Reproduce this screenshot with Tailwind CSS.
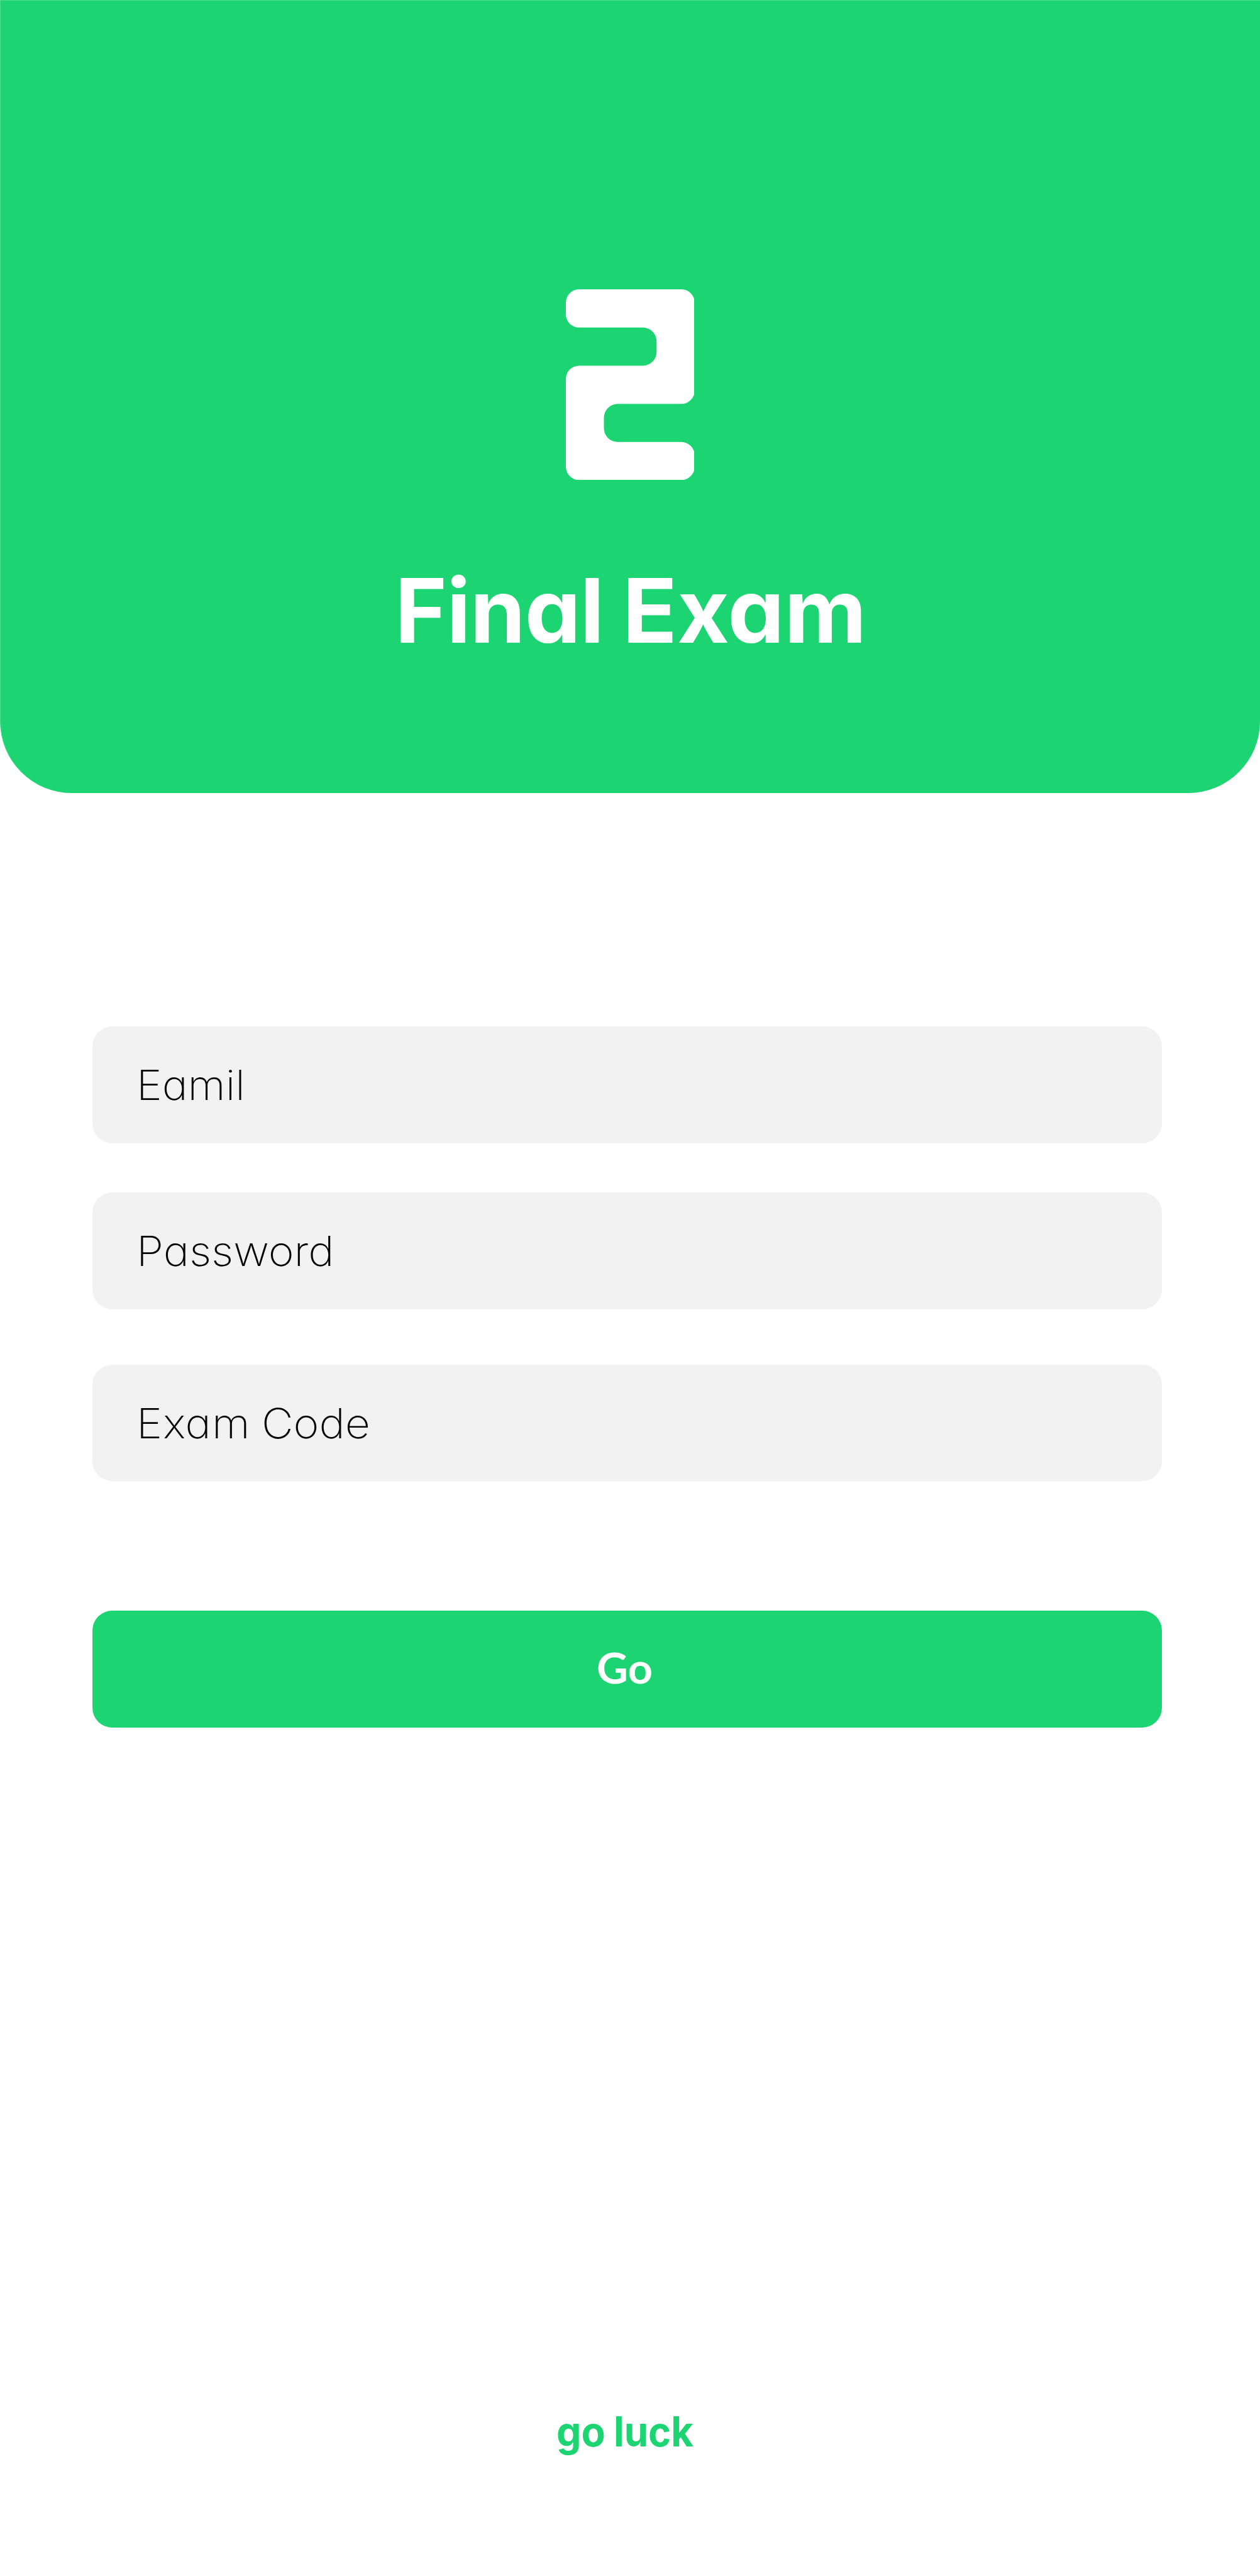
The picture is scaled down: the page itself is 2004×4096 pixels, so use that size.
<!DOCTYPE html>
<html lang="en">
<head>
<meta charset="utf-8">
<title>Final Exam</title>
<script src="https://cdn.jsdelivr.net/npm/@tailwindcss/browser@4"></script>
</head>
<body class="bg-white">
<div class="flex h-[4096px] w-[2004px] flex-col overflow-hidden bg-white font-['Inter',sans-serif] [font-feature-settings:'cv11']">
  <header class="flex h-[1260.7px] shrink-0 flex-col items-start rounded-b-[114px] border-t border-l border-[#4ddd90] bg-[#1cd472] pt-[458.8px] text-white">
    <svg class="ml-[898.5px] h-[303.3px] w-[204.8px] shrink-0" viewBox="0 0 291 431" preserveAspectRatio="none" fill="currentColor" aria-hidden="true">
      <path d="M30 0H261A30 30 0 0 1 291 30V229A30 30 0 0 1 261 259H117A31 31 0 0 0 86 290V314A31 31 0 0 0 117 345H261A30 30 0 0 1 291 375V401A30 30 0 0 1 261 431H30A30 30 0 0 1 0 401V202.500A30 30 0 0 1 30 172.500H174A31 31 0 0 0 205 141.500V117.500A31 31 0 0 0 174 86.500H30A30 30 0 0 1 0 56.500V30A30 30 0 0 1 30 0Z"/>
    </svg>
    <h1 class="mt-[137.3px] ml-[627.3px] flex gap-[29.9px] text-[141px] leading-[142px] font-bold">
      <span class="tracking-[-0.8px]">Final</span>
      <span class="origin-left scale-x-[1.016]">Exam</span>
    </h1>
  </header>

  <main class="mt-[371.8px] ml-[147px] flex w-[1700.6px] flex-col text-[65.8px] leading-none">
    <div class="flex h-[185.5px] items-center rounded-[31.5px] bg-[#f2f2f2] pt-[2px] pl-[70px] font-extralight text-black">
      <span class="origin-left scale-x-[1.05]">Eamil</span>
    </div>
    <div class="mt-[78.3px] flex h-[185.5px] items-center rounded-[31.5px] bg-[#f2f2f2] pt-[2px] pl-[70px] font-extralight text-black">
      <span class="origin-left scale-x-[1.06]">Password</span>
    </div>
    <div class="mt-[87.8px] flex h-[185.8px] items-center gap-[27.6px] rounded-[31.5px] bg-[#f2f2f2] pt-[2px] pl-[70px] font-extralight text-black">
      <span class="origin-left scale-x-[1.06] tracking-[1px]">Exam</span>
      <span class="origin-left scale-x-[1.06]">Code</span>
    </div>
    <button class="mt-[205.2px] flex h-[186px] items-center rounded-[31.5px] bg-[#1cd472] pb-[5px] pl-[801.6px] font-['Lato',sans-serif] text-[66.8px] leading-none font-bold text-white">
      <span class="origin-left scale-x-[1.03]">Go</span>
    </button>
  </main>

  <footer class="mt-[1086.4px] ml-[885px] flex gap-[8.7px] text-[65.8px] leading-[66px] font-bold text-[#1cd472]">
    <span class="origin-left scale-x-[0.95]">go</span>
    <span class="origin-left scale-x-[0.935]">luck</span>
  </footer>
</div>
</body>
</html>
